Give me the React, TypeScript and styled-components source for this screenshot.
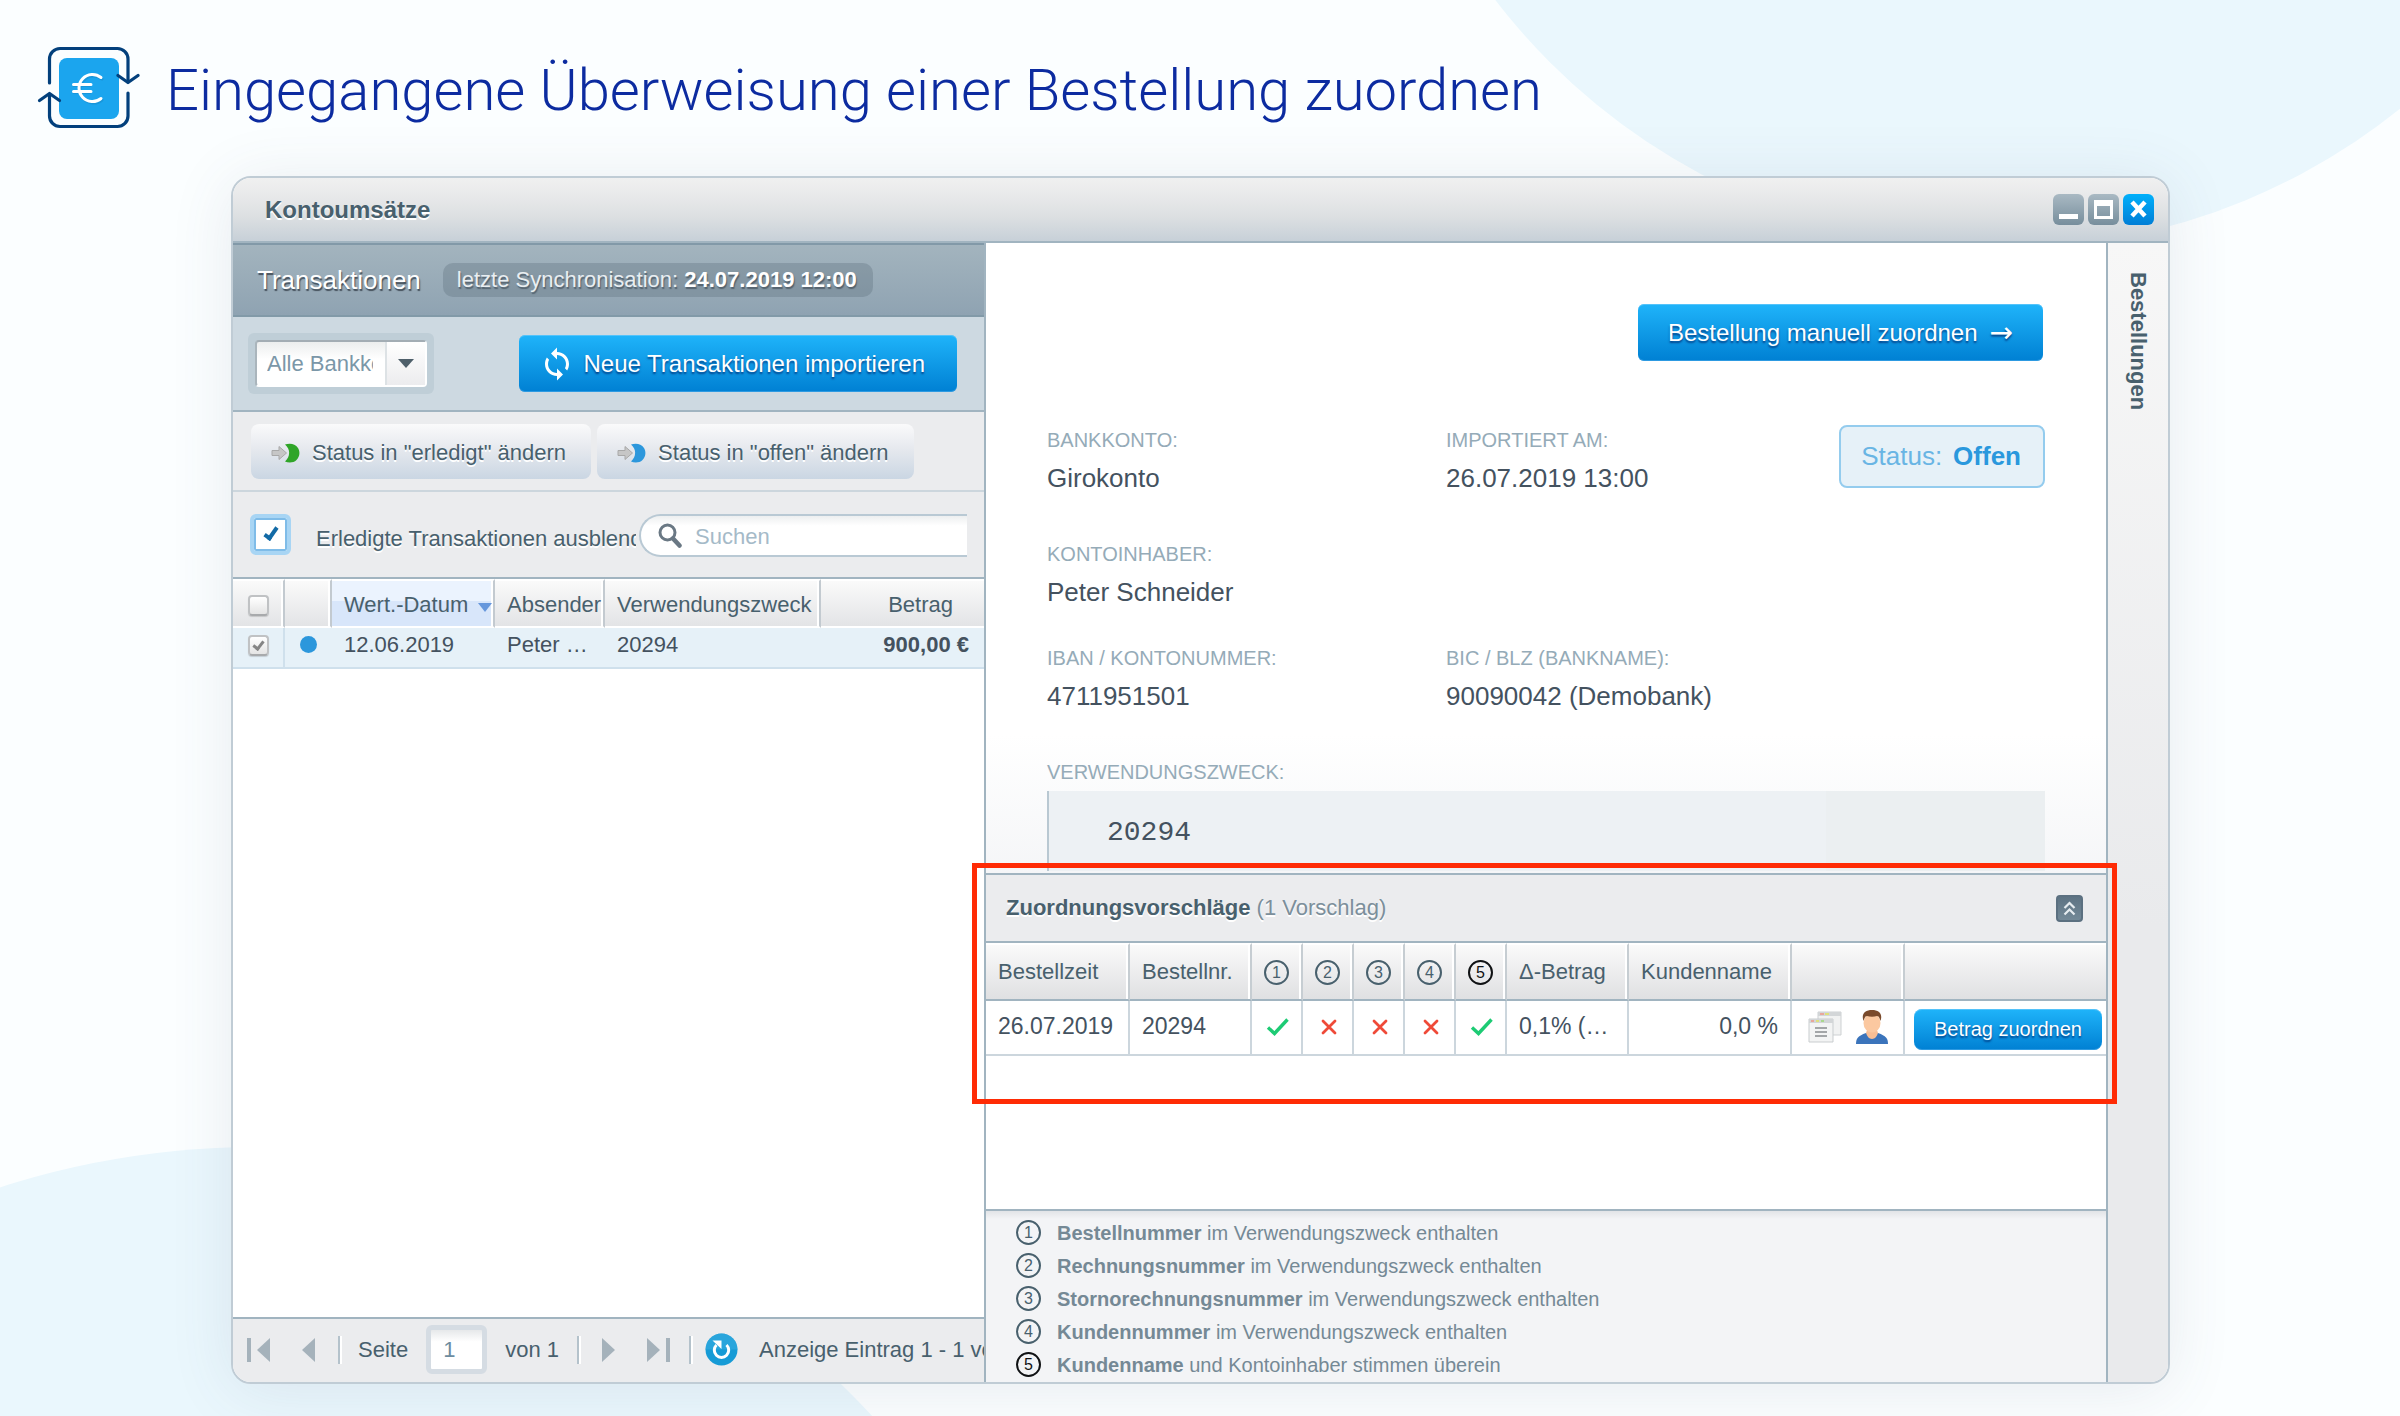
import React from "react";
import styled, { createGlobalStyle, css } from "styled-components";

const sans = `"Liberation Sans", Arial, Helvetica, sans-serif`;

const color = {
  ink: "#48606d",
  value: "#44525f",
  label: "#95abb8",
  muted: "#758995",
  line: "#a1b4c0",
  lineSoft: "#ccd6dd",
  bar: "#ebecee",
};

const GlobalStyle = createGlobalStyle`
  *, *::before, *::after { box-sizing: border-box; }
  body { margin: 0; background: #fbfeff; font-family: ${sans}; color: ${color.ink}; }
  button, input, select { font-family: inherit; margin: 0; }
  button { cursor: pointer; }
  h1, h2, h3, dl, dd, dt, ol, p { margin: 0; padding: 0; }
`;

/* ---------- Page ---------- */

const Page = styled.div`
  position: relative;
  min-height: 100vh;
  display: flex;
  flex-direction: column;
  padding-bottom: 32px;
  overflow: hidden;
`;

const Blob = styled.div<{ $place: "top" | "bottom" }>`
  position: absolute;
  border-radius: 50%;
  background: #eaf7fd;
  ${(p) =>
    p.$place === "top"
      ? css`
          width: 1276px;
          height: 1276px;
          top: -1027px;
          right: -239px;
        `
      : css`
          width: 1676px;
          height: 1676px;
          bottom: -1407px;
          left: -581px;
        `}
`;

const PageHeader = styled.header`
  position: relative;
  display: flex;
  align-items: center;
  gap: 26px;
  height: 176px;
  padding: 0 36px;
`;

const PageTitle = styled.h1`
  padding-top: 3px;
  font: 300 58px/72px Roboto, ${sans};
  color: #0c2ba0;
  white-space: nowrap;
`;

/* ---------- Window ---------- */

const Window = styled.main`
  position: relative;
  flex: 1;
  display: flex;
  flex-direction: column;
  margin: 0 230px 0 231px;
  border: 2px solid #c0ccd5;
  border-radius: 20px;
  background: #fff;
  overflow: hidden;
`;

const WindowShadow = styled.div`
  position: relative;
  flex: 1;
  display: flex;
  flex-direction: column;
  &::before {
    content: "";
    position: absolute;
    inset: 0 230px 0 231px;
    border-radius: 20px;
    box-shadow: 0 6px 64px rgba(70, 85, 110, 0.11);
  }
`;

const TitleBar = styled.div`
  display: flex;
  align-items: center;
  justify-content: space-between;
  height: 65px;
  padding: 0 14px 0 32px;
  background: linear-gradient(#f0f0f0, #e9eaeb 25%, #dde0e2 60%, #c7d0d8);
  border-bottom: 2px solid ${color.line};
`;

const WindowTitle = styled.h2`
  font-size: 24px;
  line-height: 28px;
  text-shadow: 0 2px 0 #fff;
`;

const WindowButtons = styled.div`
  display: flex;
  gap: 4px;
`;

const WindowButton = styled.button<{ $close?: boolean }>`
  width: 31px;
  height: 31px;
  padding: 0;
  border: 0;
  border-radius: 6px;
  background: ${(p) =>
    p.$close ? "linear-gradient(#00b0fb, #007ed6)" : "linear-gradient(#a9b9c3, #778e9c)"};
  svg { display: block; }
`;

const Body = styled.div`
  flex: 1;
  display: grid;
  grid-template-columns: 753px minmax(0, 1fr) 62px;
`;

/* ---------- Left panel ---------- */

const LeftPanel = styled.section`
  display: flex;
  flex-direction: column;
  min-width: 0;
  border-right: 2px solid ${color.line};
`;

const PanelHeading = styled.div`
  display: flex;
  align-items: center;
  gap: 22px;
  height: 74px;
  padding: 0 24px;
  background: linear-gradient(#a3b4be, #8fa3b2);
  border-top: 2px solid #8299a8;
  border-bottom: 2px solid #829aa8;
  color: #fff;
`;

const PanelTitle = styled.h3`
  font-size: 26px;
  line-height: 30px;
  font-weight: 400;
  text-shadow: 1px 2px 1px rgba(40, 50, 60, 0.75);
`;

const SyncChip = styled.div`
  padding: 4px 16px 4px 14px;
  border-radius: 10px;
  background: rgba(90, 110, 122, 0.32);
  font-size: 22px;
  line-height: 26px;
  color: #e9eef1;
  white-space: nowrap;
  text-shadow: 1px 2px 1px rgba(40, 50, 60, 0.5);
  b { color: #fff; }
`;

const ImportBar = styled.div`
  display: flex;
  align-items: center;
  justify-content: space-between;
  height: 95px;
  padding: 0 27px 0 15px;
  background: #cdd9e1;
  border-bottom: 2px solid ${color.line};
`;

const SelectFrame = styled.label`
  display: grid;
  grid-template-columns: 172px;
  padding: 7px;
  border-radius: 6px;
  background: #bfced7;
`;

const AccountSelect = styled.select`
  grid-area: 1 / 1;
  appearance: none;
  height: 47px;
  padding: 0 52px 0 10px;
  border: 2px solid #fff;
  border-top-color: #a3adb4;
  border-left-color: #aab5bc;
  border-radius: 4px;
  background: linear-gradient(#eceeee, #fff 40%);
  font-size: 22px;
  color: #7b97a8;
`;

const SelectArrow = styled.span`
  grid-area: 1 / 1;
  justify-self: end;
  display: grid;
  place-items: center;
  width: 40px;
  margin: 2px;
  border-left: 2px solid #dde2e5;
  background: linear-gradient(#fff, #ececee);
  pointer-events: none;
`;

const BlueButton = styled.button<{ $small?: boolean; $icon?: boolean }>`
  display: inline-flex;
  align-items: center;
  gap: ${(p) => (p.$icon ? 8 : 12)}px;
  height: ${(p) => (p.$small ? 41 : 57)}px;
  padding: 0 ${(p) => (p.$small ? 20 : 30)}px;
  ${(p) => p.$icon && "padding-left: 20px; padding-right: 32px;"}
  border: 0;
  border-radius: ${(p) => (p.$small ? 8 : 6)}px;
  background: linear-gradient(#1fb4fa, #0080d3);
  box-shadow: inset 0 1px 0 rgba(120, 205, 250, 0.6), inset 0 -1px 0 rgba(90, 180, 240, 0.5);
  color: #fff;
  font-size: ${(p) => (p.$small ? 20 : 24)}px;
  text-shadow: 0 2px 2px rgba(0, 40, 110, 0.75);
  white-space: nowrap;
`;

const Arrow = styled.span`
  font: 28px/28px "DejaVu Sans", sans-serif;
`;

const StatusBar = styled.div`
  display: flex;
  align-items: center;
  gap: 6px;
  height: 80px;
  padding: 0 18px;
  background: ${color.bar};
  border-bottom: 2px solid ${color.lineSoft};
`;

const StatusButton = styled.button`
  display: inline-flex;
  align-items: center;
  gap: 12px;
  height: 55px;
  padding: 3px 25px 0 20px;
  border: 0;
  border-radius: 8px;
  background: linear-gradient(#fafafb, #e6e9ee 45%, #cad6e3);
  color: ${color.ink};
  font-size: 22px;
  white-space: nowrap;
  text-shadow: 0 2px 0 #fff;
`;

const FilterBar = styled.div`
  display: flex;
  align-items: center;
  gap: 3px;
  height: 87px;
  padding: 0 17px;
  background: ${color.bar};
  border-bottom: 2px solid ${color.line};
`;

const FilterLabel = styled.label`
  flex: 1;
  min-width: 0;
  display: flex;
  align-items: center;
  gap: 25px;
  font-size: 22px;
  line-height: 28px;
  white-space: nowrap;
  overflow: hidden;
  text-shadow: 0 2px 0 #fff;
  span { padding-top: 8px; }
`;

const FilterCheck = styled.input`
  appearance: none;
  flex: none;
  display: grid;
  place-items: center;
  width: 41px;
  height: 41px;
  border: 4px solid #a8d5f4;
  border-radius: 6px;
  background: #fff;
  box-shadow: inset 0 0 0 2px #7fbce8;
  &:checked::after {
    content: "";
    width: 8px;
    height: 15px;
    margin-top: -4px;
    border: solid #126aa6;
    border-width: 0 4px 4px 0;
    transform: rotate(35deg);
  }
`;

const SearchBox = styled.label`
  flex: none;
  display: flex;
  align-items: center;
  gap: 13px;
  width: 328px;
  height: 43px;
  margin-top: 2px;
  padding-left: 17px;
  border: 2px solid #b9c9d4;
  border-right: 0;
  border-radius: 22px 0 0 22px;
  background: linear-gradient(#edeff0, #fff 25%);
`;

const SearchInput = styled.input`
  flex: 1;
  min-width: 0;
  padding: 2px 0 0;
  border: 0;
  outline: 0;
  background: none;
  font-size: 22px;
  color: ${color.ink};
  &::placeholder { color: #a5bac8; opacity: 1; }
`;

const Table = styled.table`
  width: 100%;
  table-layout: fixed;
  border-collapse: separate;
  border-spacing: 0;
  th, td { overflow: hidden; white-space: nowrap; }
`;

const HeadCell = styled.th<{ $sorted?: boolean; $right?: boolean; $last?: boolean }>`
  height: 49px;
  padding: 2px ${(p) => (p.$right ? 31 : 0)}px 0 12px;
  border-top: 2px solid #fff;
  border-bottom: 2px solid #fff;
  ${(p) => !p.$last && "border-right: 2px solid #c3cad0; box-shadow: inset -2px 0 0 #fff;"}
  background: ${(p) =>
    p.$sorted ? "linear-gradient(#ebf3fe 45%, #d8e6fa 45%)" : "linear-gradient(#fafafa, #e3e4e6)"};
  font-size: 22px;
  line-height: 26px;
  font-weight: 400;
  text-align: ${(p) => (p.$right ? "right" : "left")};
  color: ${color.ink};
`;

const SortRow = styled.span`
  display: flex;
  align-items: center;
  gap: 10px;
  svg { flex: none; margin-top: 6px; }
`;

const CheckCell = styled.div`
  display: flex;
  align-items: center;
  padding: 2px 3px 0;
`;

const Dot = styled.i`
  display: block;
  width: 17px;
  height: 17px;
  margin-left: 3px;
  border-radius: 50%;
  background: #2c97dc;
`;

const BodyCell = styled.td<{ $right?: boolean; $lined?: boolean }>`
  height: 41px;
  padding: 0 ${(p) => (p.$right ? 15 : 0)}px 6px 12px;
  border-bottom: 2px solid #cfe0ec;
  ${(p) => p.$lined && "border-right: 2px solid #cfe0ec;"}
  background: #e6f1f8;
  font-size: 22px;
  line-height: 26px;
  font-weight: ${(p) => (p.$right ? 700 : 400)};
  text-align: ${(p) => (p.$right ? "right" : "left")};
  color: ${color.value};
`;

const GridCheck = styled.input`
  appearance: none;
  display: grid;
  place-items: center;
  width: 21px;
  height: 21px;
  border: 2px solid #c0c2c4;
  border-bottom-color: #a8aaac;
  border-radius: 4px;
  background: linear-gradient(#fff, #e4e4e4);
  box-shadow: 0 1px 1px rgba(0, 0, 0, 0.15);
  &:checked::after {
    content: "";
    width: 7px;
    height: 11px;
    margin-top: -3px;
    border: solid #858585;
    border-width: 0 3px 3px 0;
    transform: rotate(38deg);
  }
`;

const Pager = styled.footer`
  display: flex;
  align-items: center;
  height: 65px;
  margin-top: auto;
  padding-bottom: 2px;
  border-top: 2px solid ${color.line};
  background: ${color.bar};
  font-size: 22px;
  line-height: 26px;
  white-space: nowrap;
  overflow: hidden;
`;

const PagerButton = styled.button`
  flex: none;
  display: grid;
  place-items: center;
  width: 50px;
  height: 32px;
  padding: 0;
  border: 0;
  background: none;
`;

const Divider = styled.i`
  flex: none;
  width: 4px;
  height: 28px;
  margin: 0 3px 0 5px;
  background: linear-gradient(to right, #b4c2cb 50%, #fff 50%);
`;

const PageField = styled.label`
  display: flex;
  align-items: center;
  gap: 18px;
  padding: 0 13px;
`;

const PageInput = styled.input`
  width: 61px;
  height: 49px;
  padding: 0 0 0 12px;
  border: 5px solid #d5dce3;
  border-radius: 6px;
  background: linear-gradient(#e6e8ea, #fff 30%);
  font-size: 22px;
  color: #6d8c9f;
`;

const RefreshButton = styled.button`
  flex: none;
  width: 33px;
  height: 33px;
  margin: 0 21px 0 9px;
  padding: 0;
  border: 0;
  background: none;
  svg { display: block; }
`;

/* ---------- Right panel ---------- */

const RightPanel = styled.section`
  display: flex;
  flex-direction: column;
  min-width: 0;
`;

const Detail = styled.div`
  padding: 61px 61px 2px;
  background: linear-gradient(#fff 78%, #f5f6f8);
`;

const DetailActions = styled.div`
  display: flex;
  justify-content: flex-end;
  padding-right: 2px;
  margin-bottom: 64px;
`;

const FieldRow = styled.dl<{ $gap: "wide" | "narrow" }>`
  display: grid;
  grid-template-columns: 399px 1fr auto;
  margin-bottom: ${(p) => (p.$gap === "wide" ? 46 : 36)}px;
`;

const FieldLabel = styled.dt`
  padding-top: 3px;
  font-size: 20px;
  line-height: 24px;
  color: ${color.label};
  text-transform: uppercase;
`;

const FieldValue = styled.dd`
  padding-top: 11px;
  font-size: 26px;
  line-height: 30px;
  color: ${color.value};
`;

const StatusBadge = styled.div`
  align-self: start;
  display: flex;
  align-items: center;
  gap: 11px;
  height: 63px;
  padding: 0 22px 2px 20px;
  border: 2px solid #94ccee;
  border-radius: 8px;
  background: #e6f1f8;
  font-size: 26px;
  line-height: 30px;
  color: #69b5e4;
  b { color: #2a98dd; }
`;

const Purpose = styled.div`
  height: 80px;
  margin-top: 7px;
  padding: 27px 58px;
  border-left: 2px solid #b9c8d2;
  background: linear-gradient(to right, #edf1f4 78%, #ebeff1 78%);
  font: 28px/30px "Liberation Mono", "Courier New", monospace;
  color: ${color.value};
`;

const Proposals = styled.section`
  position: relative;
  z-index: 1;
  padding-bottom: 38px;
`;

const Highlight = styled.div`
  position: absolute;
  inset: -10px -11px -10px -14px;
  border: 5px solid #ff2b05;
  pointer-events: none;
`;

const ProposalHead = styled.div`
  display: flex;
  align-items: center;
  justify-content: space-between;
  height: 70px;
  padding: 0 23px 0 20px;
  border: solid ${color.line};
  border-width: 2px 0;
  background: ${color.bar};
`;

const ProposalTitle = styled.h3`
  font-size: 22px;
  line-height: 26px;
  text-shadow: 0 2px 0 #fff;
  span { font-weight: 400; color: #7c8f9b; }
`;

const CollapseButton = styled.button`
  width: 27px;
  height: 27px;
  padding: 0;
  border: 2px solid #5b7080;
  border-radius: 4px;
  background: linear-gradient(#5d7383, #738997);
  svg { display: block; margin: auto; }
`;

const PropHead = styled.th<{ $center?: boolean; $last?: boolean }>`
  height: 58px;
  padding: 0 0 0 ${(p) => (p.$center ? 0 : 12)}px;
  border-top: 2px solid #fff;
  border-bottom: 2px solid ${color.line};
  ${(p) => !p.$last && "border-right: 2px solid #c6cdd2; box-shadow: inset -2px 0 0 #fff;"}
  background: linear-gradient(#fafafa, #dfe0e2);
  font-size: 22px;
  line-height: 26px;
  font-weight: 400;
  text-align: ${(p) => (p.$center ? "center" : "left")};
  color: ${color.ink};
`;

const PropCell = styled.td<{ $align?: "center" | "right"; $last?: boolean }>`
  height: 55px;
  padding: 0 ${(p) => (p.$align === "right" ? 12 : 0)}px 4px
    ${(p) => (p.$align === "center" ? 0 : 12)}px;
  border-bottom: 2px solid ${color.lineSoft};
  ${(p) => !p.$last && `border-right: 2px solid ${color.lineSoft};`}
  background: #fff;
  font-size: 23px;
  line-height: 26px;
  text-align: ${(p) => p.$align ?? "left"};
  color: ${color.value};
`;

const ActionCell = styled(PropCell)`
  padding: 3px 0 0 9px;
`;

const MarkBox = styled.span`
  display: flex;
  justify-content: center;
  padding: 3px 0 0 2px;
`;

const RowIcons = styled.div`
  display: flex;
  gap: 14px;
  padding: 2px 0 0 4px;
`;

const IconButton = styled.button`
  padding: 0;
  border: 0;
  background: none;
  svg { display: block; }
`;

const Circled = styled.span<{ $strong?: boolean }>`
  display: inline-block;
  width: 25px;
  height: 25px;
  border: 2px solid;
  border-radius: 50%;
  font-size: 16px;
  line-height: 21px;
  text-align: center;
  vertical-align: middle;
  color: ${(p) => (p.$strong ? "#101214" : color.ink)};
`;

const Legend = styled.ol`
  height: 173px;
  margin-top: auto;
  padding: 5px 30px 0;
  list-style: none;
  border-top: 2px solid ${color.line};
  background: linear-gradient(#e2e4e7, #f3f4f6 8px);
  font-size: 20px;
  line-height: 24px;
  color: ${color.muted};
`;

const LegendItem = styled.li`
  display: flex;
  align-items: center;
  gap: 16px;
  height: 33px;
`;

/* ---------- Side tab ---------- */

const SideTab = styled.aside`
  padding-top: 29px;
  border-left: 2px solid ${color.line};
  background: linear-gradient(#f7f7f7, #e9eaec 60%);
`;

const SideButton = styled.button`
  display: block;
  margin: 0 auto;
  padding: 0;
  border: 0;
  background: none;
  writing-mode: vertical-rl;
  font-size: 22px;
  line-height: 26px;
  font-weight: 700;
  color: ${color.ink};
`;

/* ---------- Icons ---------- */

const EuroLogo = () => (
  <svg width="104" height="84" viewBox="0 0 104 84" fill="none" aria-hidden="true">
    <rect x="23" y="12" width="60" height="61" rx="8" fill="#1ba5ee" />
    <g stroke="#03407c" strokeWidth="3.2" strokeLinecap="round" strokeLinejoin="round">
      <path d="M13.5 37V13a10.500 10.500 0 0 1 10.500-10.500H81.500a10.500 10.500 0 0 1 10.500 10.500V36" />
      <path d="M82 29.500l10 7 10-7" />
      <path d="M92 47V70a10.500 10.500 0 0 1-10.500 10.500H24a10.500 10.500 0 0 1-10.500-10.500V48" />
      <path d="M3.500 54.500l10-7 10 7" />
    </g>
    <path
      d="M66 33a13.500 13.500 0 1 0 0 21M38 39.500H54M38 46.500H54"
      stroke="#1787c8"
      strokeWidth="3"
      strokeLinecap="round"
      opacity=".5"
    />
    <path
      d="M65 31.500a13.500 13.500 0 1 0 0 21M37.500 38.500H55M37.500 45.500H55"
      stroke="#fff"
      strokeWidth="3"
      strokeLinecap="round"
    />
  </svg>
);

const SyncIcon = () => (
  <svg width="36" height="36" viewBox="0 0 24 24" fill="#fff" aria-hidden="true">
    <path d="M12 4V1L8 5l4 4V6c3.310 0 6 2.690 6 6 0 1.010-.25 1.970-.7 2.800l1.460 1.460C19.540 15.030 20 13.570 20 12c0-4.420-3.580-8-8-8zm0 14c-3.310 0-6-2.690-6-6 0-1.010.25-1.970.7-2.800L5.240 7.740C4.460 8.970 4 10.430 4 12c0 4.420 3.580 8 8 8v3l4-4-4-4v3z" />
  </svg>
);

const StatusIcon = ({ fill }: { fill: string }) => (
  <svg width="29" height="20" viewBox="0 0 29 20" aria-hidden="true">
    <path d="M14 1.500C18 0 24 0 27 5c2.500 4 1.500 9-1.500 12-3 3-8 3-11.500 1.500 5-4.500 6-12 0-17z" fill={fill} />
    <path
      d="M1 7.500H8V3.500L15.500 10 8 16.500V12.500H1z"
      fill="#c6c6c6"
      stroke="#a8a8a8"
      strokeLinejoin="round"
    />
  </svg>
);

const Magnifier = () => (
  <svg width="24" height="25" viewBox="0 0 24 25" fill="none" stroke="#6a7884" aria-hidden="true">
    <circle cx="9.500" cy="9.500" r="7.500" strokeWidth="3" />
    <path d="M15 15.500l6.500 7" strokeWidth="4.500" strokeLinecap="round" />
  </svg>
);

const PagerIcon = ({ back, end }: { back?: boolean; end?: boolean }) => (
  <svg
    width={end ? 24 : 13}
    height="26"
    viewBox={end ? "0 0 24 26" : "0 0 13 26"}
    fill="#a5b2bb"
    aria-hidden="true"
  >
    <g transform={back ? (end ? "matrix(-1 0 0 1 24 0)" : "matrix(-1 0 0 1 13 0)") : undefined}>
      <path d="M0 1L13 13 0 25z" />
      {end && <path d="M19 1h4v24h-4z" />}
    </g>
  </svg>
);

const RefreshIcon = () => (
  <svg width="33" height="33" viewBox="0 0 33 33" aria-hidden="true">
    <circle cx="16.500" cy="16.500" r="16" fill="#169bd6" />
    <path d="M16.500 .5a16 16 0 0 0-16 16h32a16 16 0 0 0-16-16z" fill="#37abdf" opacity=".6" />
    <path d="M11.500 12a7.200 7.200 0 1 0 10 0" fill="none" stroke="#fff" strokeWidth="3" />
    <path d="M7.500 7.500H16.500V16z" fill="#fff" />
  </svg>
);

const Mark = ({ ok }: { ok: boolean }) => (
  <MarkBox>
    {ok ? (
      <svg width="24" height="18" viewBox="0 0 24 18" role="img" aria-label="ja">
        <path d="M2 9.500L8.500 15.500 21.500 1.500" fill="none" stroke="#1dcb74" strokeWidth="3.400" />
      </svg>
    ) : (
      <svg width="16" height="16" viewBox="0 0 16 16" role="img" aria-label="nein">
        <path
          d="M2 2L14 14M14 2L2 14"
          stroke="#ef4a38"
          strokeWidth="2.800"
          strokeLinecap="round"
        />
      </svg>
    )}
  </MarkBox>
);

const DocsIcon = () => (
  <svg width="34" height="32" viewBox="0 0 34 32" aria-hidden="true">
    <path d="M10 1H33V24H10z" fill="#f1f2f2" stroke="#cdd1d3" />
    <path d="M10 1H33V5H10z" fill="#d3d6d8" />
    <path d="M12 2h4v2h-4z" fill="#e8a79c" />
    <path d="M17 2h4v2h-4z" fill="#dfe07c" />
    <path d="M1 8H25V31H1z" fill="#f3f4f4" stroke="#c9cdcf" />
    <path d="M1 8H25V12H1z" fill="#d3d6d8" />
    <path d="M3 9h3v2H3z" fill="#e8a79c" />
    <path d="M8 9h3v2H8z" fill="#dfe07c" />
    <path d="M13 9h3v2h-3z" fill="#a9d88c" />
    <path d="M7 17H19M7 21H19M7 25H19" stroke="#a3a6a8" strokeWidth="2" />
  </svg>
);

const PersonIcon = () => (
  <svg width="32" height="34" viewBox="0 0 32 34" aria-hidden="true">
    <path d="M0 34c0-6 2-8 10-11h12c8 3 10 5 10 11z" fill="#3b74bb" />
    <path d="M10 23l2-6h8l2 6c-1 3-3 6-6 6s-5-3-6-6z" fill="#f8be95" />
    <ellipse cx="16" cy="13" rx="8.500" ry="9.500" fill="#fbc8a0" />
    <path d="M7.500 11C5 4 9 0 16 0s11 4 8.500 11c-1-3-1.500-5-3.500-5-3 1-7 1-10 0-2 0-2.500 2-3.500 5z" fill="#7a4a2b" />
  </svg>
);

/* ---------- Data ---------- */

const proposalColumns = [144, 122, 51, 51, 51, 51, 51, 122, 163, 113];

const checks = [
  { n: 1, ok: true, name: "Bestellnummer", rest: "im Verwendungszweck enthalten" },
  { n: 2, ok: false, name: "Rechnungsnummer", rest: "im Verwendungszweck enthalten" },
  { n: 3, ok: false, name: "Stornorechnungsnummer", rest: "im Verwendungszweck enthalten" },
  { n: 4, ok: false, name: "Kundennummer", rest: "im Verwendungszweck enthalten" },
  { n: 5, ok: true, name: "Kundenname", rest: "und Kontoinhaber stimmen überein" },
];

const Field = ({ label, value }: { label: string; value: string }) => (
  <div>
    <FieldLabel>{label}</FieldLabel>
    <FieldValue>{value}</FieldValue>
  </div>
);

/* ---------- Sections ---------- */

const Transactions = () => (
  <LeftPanel>
    <PanelHeading>
      <PanelTitle>Transaktionen</PanelTitle>
      <SyncChip>
        letzte Synchronisation: <b>24.07.2019 12:00</b>
      </SyncChip>
    </PanelHeading>
    <ImportBar>
      <SelectFrame>
        <AccountSelect aria-label="Bankkonto">
          <option>Alle Bankkonten</option>
        </AccountSelect>
        <SelectArrow>
          <svg width="16" height="9" viewBox="0 0 16 9" aria-hidden="true">
            <path d="M0 0H16L8 9z" fill="#4e5f6a" />
          </svg>
        </SelectArrow>
      </SelectFrame>
      <BlueButton type="button" $icon>
        <SyncIcon />
        Neue Transaktionen importieren
      </BlueButton>
    </ImportBar>
    <StatusBar>
      <StatusButton type="button">
        <StatusIcon fill="#2fa528" />
        Status in "erledigt" ändern
      </StatusButton>
      <StatusButton type="button">
        <StatusIcon fill="#2c97dc" />
        Status in "offen" ändern
      </StatusButton>
    </StatusBar>
    <FilterBar>
      <FilterLabel>
        <FilterCheck type="checkbox" defaultChecked />
        <span>Erledigte Transaktionen ausblenden</span>
      </FilterLabel>
      <SearchBox>
        <Magnifier />
        <SearchInput type="text" placeholder="Suchen" aria-label="Suchen" />
      </SearchBox>
    </FilterBar>
    <Table>
      <colgroup>
        {[52, 47, 163, 110, 216].map((w, i) => (
          <col key={i} width={w} />
        ))}
        <col />
      </colgroup>
      <thead>
        <tr>
          <HeadCell>
            <CheckCell>
              <GridCheck type="checkbox" aria-label="Alle auswählen" />
            </CheckCell>
          </HeadCell>
          <HeadCell />
          <HeadCell $sorted>
            <SortRow>
              Wert.-Datum
              <svg width="14" height="9" viewBox="0 0 14 9" aria-hidden="true">
                <path d="M0 0H14L7 9z" fill="#6697dc" />
              </svg>
            </SortRow>
          </HeadCell>
          <HeadCell>Absender</HeadCell>
          <HeadCell>Verwendungszweck</HeadCell>
          <HeadCell $right $last>
            Betrag
          </HeadCell>
        </tr>
      </thead>
      <tbody>
        <tr>
          <BodyCell $lined>
            <CheckCell>
              <GridCheck type="checkbox" defaultChecked aria-label="Transaktion auswählen" />
            </CheckCell>
          </BodyCell>
          <BodyCell>
            <Dot />
          </BodyCell>
          <BodyCell>12.06.2019</BodyCell>
          <BodyCell>Peter …</BodyCell>
          <BodyCell>20294</BodyCell>
          <BodyCell $right>900,00 €</BodyCell>
        </tr>
      </tbody>
    </Table>
    <Pager>
      <PagerButton type="button" aria-label="Erste Seite">
        <PagerIcon back end />
      </PagerButton>
      <PagerButton type="button" aria-label="Vorherige Seite">
        <PagerIcon back />
      </PagerButton>
      <Divider />
      <PageField>
        Seite
        <PageInput type="text" defaultValue="1" />
        von 1
      </PageField>
      <Divider />
      <PagerButton type="button" aria-label="Nächste Seite">
        <PagerIcon />
      </PagerButton>
      <PagerButton type="button" aria-label="Letzte Seite">
        <PagerIcon end />
      </PagerButton>
      <Divider />
      <RefreshButton type="button" aria-label="Aktualisieren">
        <RefreshIcon />
      </RefreshButton>
      Anzeige Eintrag 1 - 1 von 1
    </Pager>
  </LeftPanel>
);

const TransactionDetail = () => (
  <Detail>
    <DetailActions>
      <BlueButton type="button">
        Bestellung manuell zuordnen <Arrow>→</Arrow>
      </BlueButton>
    </DetailActions>
    <FieldRow $gap="wide">
      <Field label="Bankkonto:" value="Girokonto" />
      <Field label="Importiert am:" value="26.07.2019 13:00" />
      <StatusBadge>
        Status: <b>Offen</b>
      </StatusBadge>
    </FieldRow>
    <FieldRow $gap="narrow">
      <Field label="Kontoinhaber:" value="Peter Schneider" />
    </FieldRow>
    <FieldRow $gap="wide">
      <Field label="IBAN / Kontonummer:" value="4711951501" />
      <Field label="BIC / BLZ (Bankname):" value="90090042 (Demobank)" />
    </FieldRow>
    <FieldLabel as="div">Verwendungszweck:</FieldLabel>
    <Purpose>20294</Purpose>
  </Detail>
);

const ProposalList = () => (
  <Proposals>
    <ProposalHead>
      <ProposalTitle>
        Zuordnungsvorschläge <span>(1 Vorschlag)</span>
      </ProposalTitle>
      <CollapseButton type="button" aria-label="Einklappen">
        <svg width="15" height="17" viewBox="0 0 15 17" fill="none" stroke="#e6ecf0" strokeWidth="2.200">
          <path d="M2.500 8L7.500 3l5 5M2.500 14.500l5-5 5 5" />
        </svg>
      </CollapseButton>
    </ProposalHead>
    <Table>
      <colgroup>
        {proposalColumns.map((w, i) => (
          <col key={i} width={w} />
        ))}
        <col />
      </colgroup>
      <thead>
        <tr>
          <PropHead>Bestellzeit</PropHead>
          <PropHead>Bestellnr.</PropHead>
          {checks.map((c) => (
            <PropHead key={c.n} $center>
              <Circled $strong={c.n === 5}>{c.n}</Circled>
            </PropHead>
          ))}
          <PropHead>Δ-Betrag</PropHead>
          <PropHead>Kundenname</PropHead>
          <PropHead />
          <PropHead $last />
        </tr>
      </thead>
      <tbody>
        <tr>
          <PropCell>26.07.2019</PropCell>
          <PropCell>20294</PropCell>
          {checks.map((c) => (
            <PropCell key={c.n} $align="center">
              <Mark ok={c.ok} />
            </PropCell>
          ))}
          <PropCell>0,1% (…</PropCell>
          <PropCell $align="right">0,0 %</PropCell>
          <PropCell>
            <RowIcons>
              <IconButton type="button" aria-label="Bestellung öffnen">
                <DocsIcon />
              </IconButton>
              <IconButton type="button" aria-label="Kunde öffnen">
                <PersonIcon />
              </IconButton>
            </RowIcons>
          </PropCell>
          <ActionCell $last>
            <BlueButton type="button" $small>
              Betrag zuordnen
            </BlueButton>
          </ActionCell>
        </tr>
      </tbody>
    </Table>
    <Highlight />
  </Proposals>
);

export default function App() {
  return (
    <Page>
      <GlobalStyle />
      <Blob $place="top" />
      <Blob $place="bottom" />
      <PageHeader>
        <EuroLogo />
        <PageTitle>Eingegangene Überweisung einer Bestellung zuordnen</PageTitle>
      </PageHeader>
      <WindowShadow>
        <Window>
          <TitleBar>
            <WindowTitle>Kontoumsätze</WindowTitle>
            <WindowButtons>
              <WindowButton type="button" aria-label="Minimieren">
                <svg width="31" height="31" viewBox="0 0 31 31">
                  <path d="M6 20h19v5H6z" fill="#fff" />
                </svg>
              </WindowButton>
              <WindowButton type="button" aria-label="Maximieren">
                <svg width="31" height="31" viewBox="0 0 31 31">
                  <path d="M6 6h19v19H6zM9 12v10h13V12z" fill="#fff" fillRule="evenodd" />
                </svg>
              </WindowButton>
              <WindowButton type="button" aria-label="Schließen" $close>
                <svg width="31" height="31" viewBox="0 0 31 31">
                  <path d="M9 8L22 22M22 8L9 22" stroke="#fff" strokeWidth="4.500" />
                </svg>
              </WindowButton>
            </WindowButtons>
          </TitleBar>
          <Body>
            <Transactions />
            <RightPanel>
              <TransactionDetail />
              <ProposalList />
              <Legend>
                {checks.map((c) => (
                  <LegendItem key={c.n}>
                    <Circled $strong={c.n === 5}>{c.n}</Circled>
                    <span>
                      <b>{c.name}</b> {c.rest}
                    </span>
                  </LegendItem>
                ))}
              </Legend>
            </RightPanel>
            <SideTab>
              <SideButton type="button">Bestellungen</SideButton>
            </SideTab>
          </Body>
        </Window>
      </WindowShadow>
    </Page>
  );
}
